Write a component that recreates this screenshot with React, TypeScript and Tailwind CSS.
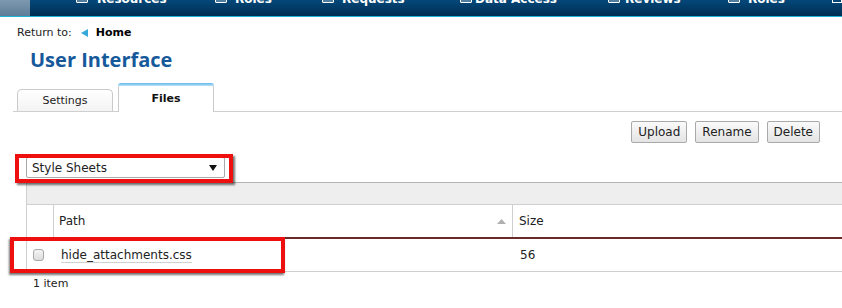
import React from 'react'

const NAV_ITEMS = [
  { label: 'Resources', icon: 76, text: 97 },
  { label: 'Roles', icon: 215, text: 235 },
  { label: 'Requests', icon: 322, text: 342 },
  { label: 'Data Access', icon: 460, text: 475 },
  { label: 'Reviews', icon: 608, text: 625 },
  { label: 'Roles', icon: 728, text: 748 },
]

function TopNav() {
  return (
    <div className="relative h-[17px] overflow-hidden border-b border-[#20b4d6] bg-gradient-to-b from-[#04477a] to-[#002f52]">
      <div className="absolute left-0 top-0 h-full w-[30px] bg-gradient-to-b from-[#7d98b0] to-[#5f7d98]" />
      {NAV_ITEMS.map((item) => (
        <React.Fragment key={item.label + item.icon}>
          <div
            className="absolute top-[-4px] h-[7px] w-[12px] rounded-[1px] border border-white bg-white/30"
            style={{ left: item.icon }}
          />
          <span
            className="absolute top-[-8px] whitespace-nowrap font-['DejaVu_Sans',sans-serif] text-[12px] font-bold leading-[14px] text-white"
            style={{ left: item.text }}
          >
            {item.label}
          </span>
        </React.Fragment>
      ))}
      <div className="absolute left-[832px] top-[-4px] h-[7px] w-[10px] border border-white" />
    </div>
  )
}

function Tabs() {
  return (
    <div className="ml-[13px] flex h-[29px] items-end gap-[5px] border-b border-[#cfcfcf] pl-[4px]">
      <div className="flex h-[22px] w-[96px] items-center justify-center rounded-t-[5px] border border-b-0 border-[#cacaca] bg-gradient-to-b from-white to-[#f3f3f3] pt-[2px] text-[11px] text-[#222]">
        Settings
      </div>
      <div className="relative -mb-px flex h-[29px] w-[96px] items-start justify-center rounded-t-[5px] border border-b-0 border-[#cacaca] bg-white pt-[7px] text-[11px] font-bold text-[#111]">
        <div className="absolute left-[-1px] right-[-1px] top-[-1px] h-[3px] rounded-t-[5px] bg-gradient-to-b from-[#5cb6ea] to-[#bfe3f6]" />
        Files
      </div>
    </div>
  )
}

function ToolButton({ label }: { label: string }) {
  return (
    <button className="h-[22px] rounded-[2px] border border-[#a9a9a9] bg-gradient-to-b from-[#fafafa] to-[#e4e4e4] px-[6px] text-[12px] leading-[20px] text-[#222]">
      {label}
    </button>
  )
}

export default function App() {
  return (
    <div className="relative h-[308px] w-[842px] overflow-hidden bg-white font-['DejaVu_Sans',sans-serif] text-[#222]">
      <TopNav />

      {/* Return to */}
      <div className="mt-[9px] flex h-[14px] items-center pl-[17px] text-[11px] leading-[14px]">
        <span>Return to:</span>
        <svg className="ml-[9px] mr-[7px]" width="8" height="8" viewBox="0 0 8 8">
          <polygon points="7,0 7,8 0,4" fill="#35a9dc" />
        </svg>
        <span className="font-bold text-black">Home</span>
      </div>

      <h1 className="ml-[30px] mt-[8px] font-['Open_Sans',sans-serif] text-[20px] font-bold leading-[24px] text-[#16599b]">
        User Interface
      </h1>

      <div className="mt-[11px]">
        <Tabs />
      </div>

      {/* Toolbar */}
      <div className="mt-[9px] flex justify-end gap-[8px] pr-[22px]">
        <ToolButton label="Upload" />
        <ToolButton label="Rename" />
        <ToolButton label="Delete" />
      </div>

      {/* Select */}
      <div className="ml-[26px] mt-[14px] flex h-[21px] w-[199px] items-center justify-between rounded-[2px] border border-[#a9a9a9] bg-white pl-[5px] pr-[7px] text-[12px]">
        <span>Style Sheets</span>
        <svg width="8" height="6" viewBox="0 0 8 6">
          <polygon points="0,0 8,0 4,6" fill="#111" />
        </svg>
      </div>

      {/* Grid */}
      <div className="ml-[26px] mt-[4px] border-l border-t border-[#b3b3b3] border-l-[#cfcfcf]">
        <div className="h-[22px] border-b border-[#cfcfcf] bg-[#eeeeee]" />
        <div className="flex h-[34px] border-b-2 border-[#6a2a2a] text-[12px]">
          <div className="w-[27px] border-r border-[#cfcfcf]" />
          <div className="flex w-[459px] items-center justify-between border-r border-[#cfcfcf] pl-[5px] pr-[6px]">
            <span>Path</span>
            <svg width="9" height="5" viewBox="0 0 9 5">
              <polygon points="0,5 9,5 4.5,0" fill="#b0b0b0" />
            </svg>
          </div>
          <div className="flex flex-1 items-center pl-[6px]">Size</div>
        </div>
        <div className="flex h-[33px] border-b border-[#cfcfcf] text-[12px]">
          <div className="flex w-[27px] items-center pl-[6px]">
            <div className="h-[12px] w-[11px] rounded-[3px] border border-[#a8a8a8] bg-gradient-to-b from-[#f4f4f4] to-[#dcdcdc]" />
          </div>
          <div className="flex w-[460px] items-center pl-[7px]">
            <span className="border-b border-[#d0d0d0] leading-[14px]">hide_attachments.css</span>
          </div>
          <div className="flex flex-1 items-center pl-[6px]">56</div>
        </div>
      </div>

      <div className="ml-[33px] mt-[6px] text-[11px] leading-[12px]">1 item</div>

      {/* Highlight annotations */}
      <div className="absolute left-[15px] top-[154px] h-[29px] w-[218px] border-[4px] border-[#ee0f0f] shadow-[2px_2px_2px_rgba(0,0,0,0.55)]" />
      <div className="absolute left-[10px] top-[237px] h-[36px] w-[275px] border-[4px] border-[#ee0f0f] shadow-[-1px_2px_2px_rgba(0,0,0,0.55)]" />
    </div>
  )
}
